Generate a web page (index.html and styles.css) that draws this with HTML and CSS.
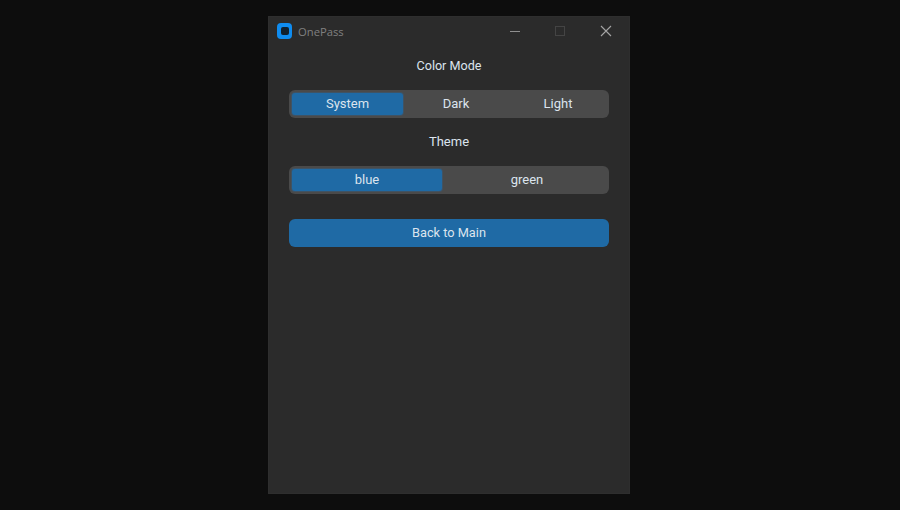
FILE: index.html
```html
<!DOCTYPE html>
<html lang="en">
<head>
<meta charset="utf-8">
<title>OnePass</title>
<link rel="stylesheet" href="styles.css">
</head>
<body>
<div class="window">
  <header class="titlebar">
    <div class="brand">
      <span class="logo"><span class="logo-hole"></span></span>
      <span class="app-name">OnePass</span>
    </div>
    <div class="controls">
      <svg class="ctl ctl-min" width="12" height="12" viewBox="0 0 12 12"><path d="M1 6.5H11" stroke="#8f8f8f" stroke-width="1" fill="none"/></svg>
      <svg class="ctl ctl-max" width="12" height="12" viewBox="0 0 12 12"><rect x="1.5" y="1.5" width="9" height="9" stroke="#444" stroke-width="1" fill="none"/></svg>
      <svg class="ctl ctl-close" width="12" height="12" viewBox="0 0 12 12"><path d="M1 1L11 11M11 1L1 11" stroke="#a5a5a5" stroke-width="1.1" fill="none"/></svg>
    </div>
  </header>
  <main class="content">
    <div class="label label-mode">Color Mode</div>
    <div class="segmented seg-mode">
      <div class="seg seg-system selected">System</div>
      <div class="seg seg-dark">Dark</div>
      <div class="seg seg-light">Light</div>
    </div>
    <div class="label label-theme">Theme</div>
    <div class="segmented seg-theme">
      <div class="seg seg-blue selected">blue</div>
      <div class="seg seg-green">green</div>
    </div>
    <button class="back">Back to Main</button>
  </main>
</div>
</body>
</html>
```
FILE: styles.css
```css
* { box-sizing: border-box; }
html, body { margin: 0; height: 100%; }
body {
  background: #0d0d0d;
  padding: 16px 0 0 268px;
  font-family: Roboto, "Liberation Sans", sans-serif;
  overflow: hidden;
}
.window {
  width: 362px;
  height: 478px;
  background: #2b2b2b;
  box-shadow: inset 0 0 0 1px #2e2e2e;
  display: flex;
  flex-direction: column;
}
.titlebar {
  height: 30px;
  display: flex;
  align-items: center;
  justify-content: space-between;
  padding: 0 18px 0 9px;
}
.brand { display: flex; align-items: center; gap: 6px; }
.logo {
  width: 15px;
  height: 16px;
  border-radius: 4px;
  background: #0f8cf0;
  display: flex;
  align-items: center;
  justify-content: center;
}
.logo-hole {
  width: 8px;
  height: 8px;
  border-radius: 2px;
  background: #10202e;
}
.app-name {
  font-family: "Open Sans", sans-serif;
  font-size: 11.25px;
  color: #808080;
}
.controls { display: flex; align-items: center; gap: 33px; }
.ctl { display: block; }
.ctl-close { margin-left: 1px; }
.content {
  padding: 0 21px;
  display: flex;
  flex-direction: column;
}
.label {
  height: 28px;
  line-height: 28px;
  text-align: center;
  color: #dce4ee;
}
.label-mode { font-size: 12.6px; margin-top: 6px; margin-bottom: 10px; }
.label-theme { font-size: 13px; margin-top: 10px; margin-bottom: 10px; }
.segmented {
  height: 28px;
  border-radius: 6px;
  background: #4a4a4a;
  padding: 3px;
  display: flex;
}
.seg {
  font-size: 13px;
  line-height: 22px;
  text-align: center;
  color: #dce4ee;
  border-radius: 3px;
}
.selected { background: #1f6aa5; box-shadow: 0 0 0 1px #3f5364; }
.seg-system { width: 111px; }
.seg-dark { width: 106px; }
.seg-light { width: 97px; padding-left: 1px; }
.seg-blue { width: 150px; }
.seg-green { flex: 1; padding-left: 6px; }
.back {
  display: block;
  width: 100%;
  height: 28px;
  margin-top: 25px;
  padding: 0 0 2px;
  border: 0;
  border-radius: 6px;
  background: #1f6aa5;
  color: #dce4ee;
  font-family: inherit;
  font-size: 12.75px;
}
```
